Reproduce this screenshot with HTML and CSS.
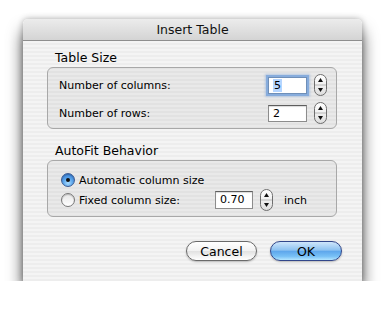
FILE: index.html
```html
<!DOCTYPE html>
<html lang="en">
<head>
    <meta charset="UTF-8">
    <title>Insert Table</title>
    <link rel="stylesheet" href="styles.css">
</head>
<body>
    <div class="dialog">
        <div class="titlebar">Insert Table</div>

        <div class="content">
            <div class="group-label">Table Size</div>
            <div class="group group-size">
                <div class="row">
                    <span class="label">Number of columns:</span>
                    <span class="field focused"><span class="selected">5</span></span>
                    <svg class="stepper" width="13" height="22" viewBox="0 0 13 22">
                        <rect x="0.5" y="0.5" width="12" height="21" rx="6" fill="url(#stepGrad)" stroke="#6e6e6e"/>
                        <line x1="1" y1="11" x2="12" y2="11" stroke="#b8b8b8"/>
                        <path d="M6.5 4 L9 8 L4 8 Z" fill="#111"/>
                        <path d="M6.5 18 L9 14 L4 14 Z" fill="#111"/>
                    </svg>
                </div>
                <div class="row">
                    <span class="label">Number of rows:</span>
                    <span class="field">2</span>
                    <svg class="stepper" width="13" height="22" viewBox="0 0 13 22">
                        <rect x="0.5" y="0.5" width="12" height="21" rx="6" fill="url(#stepGrad)" stroke="#6e6e6e"/>
                        <line x1="1" y1="11" x2="12" y2="11" stroke="#b8b8b8"/>
                        <path d="M6.5 4 L9 8 L4 8 Z" fill="#111"/>
                        <path d="M6.5 18 L9 14 L4 14 Z" fill="#111"/>
                    </svg>
                </div>
            </div>

            <div class="group-label">AutoFit Behavior</div>
            <div class="group group-fit">
                <div class="row">
                    <span class="radio on"></span>
                    <span>Automatic column size</span>
                </div>
                <div class="row">
                    <span class="radio"></span>
                    <span class="radio-text">Fixed column size:</span>
                    <span class="field small">0.70</span>
                    <svg class="stepper" width="13" height="22" viewBox="0 0 13 22">
                        <rect x="0.5" y="0.5" width="12" height="21" rx="6" fill="url(#stepGrad)" stroke="#6e6e6e"/>
                        <line x1="1" y1="11" x2="12" y2="11" stroke="#b8b8b8"/>
                        <path d="M6.5 4 L9 8 L4 8 Z" fill="#111"/>
                        <path d="M6.5 18 L9 14 L4 14 Z" fill="#111"/>
                    </svg>
                    <span class="unit">inch</span>
                </div>
            </div>

            <div class="buttons">
                <button class="btn">Cancel</button>
                <button class="btn btn-default">OK</button>
            </div>
        </div>
    </div>

    <!-- shared gradient for the little steppers -->
    <svg width="0" height="0" class="defs">
        <defs>
            <linearGradient id="stepGrad" x1="0" y1="0" x2="0" y2="1">
                <stop offset="0" stop-color="#ffffff"/>
                <stop offset="0.5" stop-color="#f0f0f0"/>
                <stop offset="1" stop-color="#dcdcdc"/>
            </linearGradient>
        </defs>
    </svg>
</body>
</html>
```

FILE: styles.css
```css
* {
    margin: 0;
    padding: 0;
    box-sizing: border-box;
}

body {
    background: #ffffff;
    font-family: 'DejaVu Sans', sans-serif;
    font-size: 11px;
    color: #000;
    padding: 19px 0 0 23px;
}

.defs {
    position: absolute;
}

.dialog {
    width: 339px;
    height: 262px;
    border-radius: 5px 5px 0 0;
    background: repeating-linear-gradient(#ededed 0, #ededed 2px, #f4f4f4 2px, #f4f4f4 4px);
    box-shadow: 0 12px 16px rgba(0,0,0,0.7), 0 0 6px rgba(0,0,0,0.3);
    overflow: hidden;
}

.titlebar {
    height: 22px;
    line-height: 21px;
    text-align: center;
    font-size: 12.5px;
    color: #111;
    background: linear-gradient(#ececec, #d4d4d4);
    border-bottom: 1px solid #8e8e8e;
    border-radius: 5px 5px 0 0;
}

.content {
    padding: 9px 25px 0 24px;
}

.group-label {
    font-size: 12.5px;
    line-height: 16px;
    padding-left: 8px;
    margin-bottom: 1px;
}

.group {
    border: 1px solid #a8a8a8;
    border-radius: 6px;
    background: rgba(0,0,0,0.045);
}

.group-size {
    padding: 6px 9px 4px 11px;
    margin-bottom: 14px;
}

.group-size .row {
    height: 22px;
    display: flex;
    align-items: center;
}

.group-size .row + .row {
    margin-top: 6px;
}

.label {
    flex: 1;
}

.field {
    width: 39px;
    height: 17px;
    line-height: 15px;
    padding-left: 4px;
    background: #fff;
    border: 1px solid #8c8c8c;
    border-top-color: #5e5e5e;
    box-shadow: inset 0 1px 1px rgba(0,0,0,0.15);
    margin-right: 7px;
}

.field.focused {
    box-shadow: 0 0 0 2px #87acdc, 0 0 2px 3px rgba(120,160,215,0.45);
    border-color: #6f8fb8;
}

.selected {
    background: #b5d5ff;
    padding: 0 1px;
}

.field.small {
    width: 38px;
    height: 18px;
    line-height: 16px;
}

.stepper {
    display: block;
}

.group-fit {
    padding: 9px 10px 6px 13px;
}

.group-fit .row {
    height: 20px;
    display: flex;
    align-items: center;
}

.radio {
    width: 14px;
    height: 14px;
    border-radius: 50%;
    border: 1px solid #777;
    background: linear-gradient(#e6e6e6, #ffffff);
    box-shadow: inset 0 1px 1px rgba(0,0,0,0.2);
    margin-right: 4px;
    position: relative;
}

.radio.on {
    border-color: #3a5a92;
    background: radial-gradient(circle at 50% 75%, #a9dcff 0, #5aa4ea 45%, #2f73cd 100%);
}

.radio.on::after {
    content: '';
    position: absolute;
    left: 4px;
    top: 4px;
    width: 4px;
    height: 4px;
    border-radius: 50%;
    background: #111;
}

.radio-text {
    width: 136px;
}

.unit {
    margin-left: 11px;
}

.buttons {
    display: flex;
    justify-content: flex-end;
    gap: 13px;
    margin-top: 24px;
    margin-right: -5px;
}

.btn {
    font-family: 'DejaVu Sans', sans-serif;
    font-size: 12.5px;
    width: 71px;
    height: 20px;
    border-radius: 10px;
    border: 1px solid #6a6a6a;
    background: linear-gradient(#ffffff 0%, #f2f2f2 48%, #e2e2e2 52%, #f6f6f6 85%, #ffffff 100%);
    box-shadow: 0 1px 2px rgba(0,0,0,0.25);
    color: #000;
}

.btn-default {
    width: 72px;
    border-color: #32478a;
    background: linear-gradient(#cfe6fb 0%, #8dc2f1 45%, #5ea7ec 52%, #79c1f6 80%, #b4e6ff 100%);
}
```
